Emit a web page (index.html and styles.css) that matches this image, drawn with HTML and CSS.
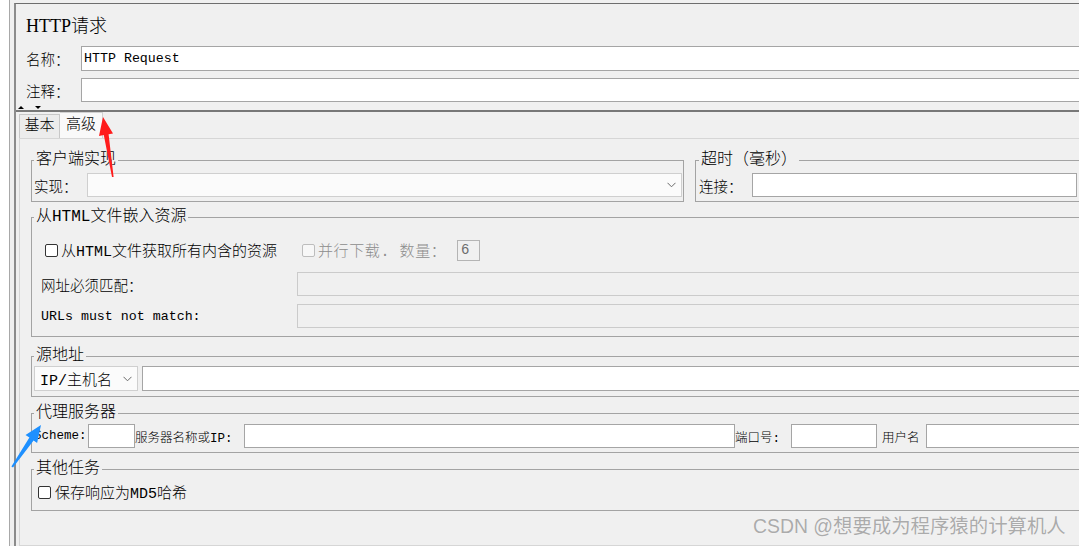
FILE: index.html
```html
<!DOCTYPE html>
<html lang="zh-CN">
<head>
    <meta charset="UTF-8">
    <meta name="viewport" content="width=device-width, initial-scale=1.0">
    <title>HTTP请求</title>
    <link rel="stylesheet" href="styles.css">
</head>
<body>

<div class="app">
    <div class="side"></div>
    <div class="frame">
        <div class="head">
            <h1 class="title">HTTP请求</h1>
            <div class="row">
                <label class="row-label">名称：</label>
                <input class="text" type="text" value="HTTP Request">
            </div>
            <div class="row row-comment">
                <label class="row-label">注释：</label>
                <input class="text" type="text">
            </div>
        </div>

        <div class="splitter">
            <span class="tri up"></span>
            <span class="tri down"></span>
        </div>

        <div class="tabs">
            <div class="tab">基本</div>
            <div class="tab active">高级</div>
        </div>

        <div class="panel">
            <div class="fs-row">
                <fieldset class="group impl">
                    <legend>客户端实现</legend>
                    <div class="line">
                        <label class="lbl w53">实现：</label>
                        <div class="combo grow">
                            <span></span>
                            <svg class="chev" width="9" height="6" viewBox="0 0 9 6"><path d="M0.5 0.8 L4.5 4.8 L8.5 0.8" fill="none" stroke="#6a6a6a" stroke-width="1"/></svg>
                        </div>
                    </div>
                </fieldset>
                <fieldset class="group timeout">
                    <legend>超时（毫秒）</legend>
                    <div class="line">
                        <label class="lbl w53">连接：</label>
                        <input class="text grow" type="text">
                    </div>
                </fieldset>
            </div>

            <fieldset class="group embed">
                <legend>从HTML文件嵌入资源</legend>
                <div class="line">
                    <input class="check first" type="checkbox">
                    <span class="check-text all-res">从HTML文件获取所有内含的资源</span>
                    <input class="check" type="checkbox" disabled>
                    <span class="check-text muted par">并行下载. 数量：</span>
                    <input class="text num" type="text" value="6" disabled>
                </div>
                <div class="line gap10">
                    <label class="lbl w256">网址必须匹配：</label>
                    <input class="text grow" type="text" disabled>
                </div>
                <div class="line gap8">
                    <label class="lbl w256 mono">URLs must not match:</label>
                    <input class="text grow" type="text" disabled>
                </div>
            </fieldset>

            <fieldset class="group source">
                <legend>源地址</legend>
                <div class="line">
                    <div class="combo ip">
                        <span>IP/主机名</span>
                        <svg class="chev" width="9" height="6" viewBox="0 0 9 6"><path d="M0.5 0.8 L4.5 4.8 L8.5 0.8" fill="none" stroke="#6a6a6a" stroke-width="1"/></svg>
                    </div>
                    <input class="text grow" type="text">
                </div>
            </fieldset>

            <fieldset class="group proxy">
                <legend>代理服务器</legend>
                <div class="line small">
                    <label class="lbl w54">Scheme:</label>
                    <input class="text w47" type="text">
                    <label class="lbl w109">服务器名称或IP:</label>
                    <input class="text w491" type="text">
                    <label class="lbl w56">端口号:</label>
                    <input class="text w86" type="text">
                    <label class="lbl user">用户名</label>
                    <input class="text grow" type="text">
                </div>
            </fieldset>

            <fieldset class="group other">
                <legend>其他任务</legend>
                <div class="line short">
                    <input class="check" type="checkbox">
                    <span class="check-text">保存响应为MD5哈希</span>
                </div>
            </fieldset>
        </div>
    </div>

    <svg class="marks" width="1079" height="546" viewBox="0 0 1079 546">
        <polygon fill="#ff1c1c" points="103,117 113,133.5 108.6,134.3 113.6,177 112,177 103.8,135.1 99,136"/>
        <polygon fill="#1e90ff" points="41,425 37.1,443 33.6,440.6 13,467.5 11.4,466.5 29.4,437.6 25.5,435"/>
    </svg>

    <div class="watermark">CSDN @想要成为程序猿的计算机人</div>
</div>

</body>
</html>
```

FILE: styles.css
```css
* {
    box-sizing: border-box;
}
html, body {
    margin: 0;
    height: 100%;
    overflow: hidden;
}
body {
    background-color: #f0f0f0;
    font-family: "Liberation Mono", "Noto Sans CJK SC", monospace;
    font-size: 14.5px;
    font-weight: 300;
    color: #000;
}
.app {
    position: relative;
    display: flex;
    height: 546px;
}
.side {
    flex: none;
    width: 10px;
    background: #fff;
    border-right: 1px solid #a8a8a8;
}
.frame {
    flex: none;
    width: 1090px;
    margin-left: 4px;
    margin-top: 3px;
    border-top: 1px solid #6e6e6e;
    border-left: 2px solid #8c8c8c;
    display: flex;
    flex-direction: column;
}
.head {
    padding-left: 10px;
}
.title {
    margin: 10px 0 0;
    font-family: "Liberation Serif", "Noto Sans CJK SC", serif;
    font-size: 18px;
    line-height: 24px;
    font-weight: 300;
}
.row {
    display: flex;
    align-items: center;
    height: 25px;
    margin-top: 8px;
}
.row-comment {
    height: 24px;
    margin-top: 7px;
}
.row-label {
    flex: none;
    width: 55px;
}
input.text {
    height: 100%;
    min-width: 0;
    margin: 0;
    padding: 0 2px;
    border: 1px solid #a5a5a5;
    background: #fff;
    font-family: "Liberation Mono", "Noto Sans CJK SC", monospace;
    font-size: 13.3px;
    color: #000;
    outline: none;
}
.row input.text {
    flex: 1;
}
input.text:disabled {
    background: #f0f0f0;
    border-color: #cbcbcb;
}
.splitter {
    height: 10px;
    display: flex;
    align-items: flex-end;
    gap: 7px;
    padding: 0 0 1px 2px;
    border-bottom: 2px solid #787878;
}
.tri {
    width: 0;
    height: 0;
    border-left: 3px solid transparent;
    border-right: 3px solid transparent;
}
.tri.up {
    border-bottom: 3px solid #000;
}
.tri.down {
    border-top: 3px solid #000;
    margin-left: 4px;
}
.tabs {
    display: flex;
    align-items: flex-end;
    height: 26px;
    padding-left: 3px;
}
.tab {
    height: 24px;
    width: 41px;
    text-align: center;
    font-size: 15px;
    line-height: 23px;
    background: #ececec;
    border: 1px solid #c8c8c8;
    border-bottom: none;
}
.tab.active {
    height: 26px;
    width: 43px;
    line-height: 25px;
    background: #f9f9f9;
    border-color: #d2d2d2;
    border-left: none;
}
.panel {
    flex: 1;
    margin-left: 3px;
    border: 1px solid #d6d6d6;
    padding: 11px 0 0 11px;
}
.fs-row {
    display: flex;
    gap: 11px;
}
fieldset.group {
    margin: 0;
    min-width: 0;
    border: 1px solid #a3a3a3;
    padding: 3px 1px 4px 2px;
}
fieldset.group legend {
    font-size: 16px;
    line-height: 20px;
    padding: 0 2px;
    margin: 0;
}
.impl {
    flex: none;
    width: 653px;
}
.timeout {
    flex: none;
    width: 392px;
    padding: 3px 9px 4px 3px !important;
}
.line {
    display: flex;
    align-items: center;
    height: 24px;
}
.lbl {
    flex: none;
    white-space: nowrap;
}
.w53 { width: 53px; }
.w256 { width: 256px; }
.grow {
    flex: 1;
}
.combo {
    display: flex;
    align-items: center;
    justify-content: space-between;
    height: 100%;
    padding: 0 5px;
    background: #fbfbfb;
    border: 1px solid #cfcfcf;
}
.chev {
    flex: none;
}
.embed {
    margin-top: 5px !important;
    padding: 11px 0 8px 2px !important;
}
.embed .line {
    padding-left: 7px;
}
.check {
    appearance: none;
    -webkit-appearance: none;
    flex: none;
    width: 13px;
    height: 13px;
    margin: 0;
    border: 1px solid #333;
    border-radius: 2px;
    background: #fff;
}
.check:disabled {
    border-color: #bdbdbd;
    background: #f7f7f7;
}
.check.first {
    margin-left: 4px;
}
.check-text {
    margin-left: 3px;
    white-space: nowrap;
}
.check-text.all-res {
    width: 241px;
    font-size: 15px;
}
.check-text.par {
    width: 139px;
    font-size: 15px;
    letter-spacing: 0.6px;
}
.muted {
    color: #8c8c8c;
}
input.text.num {
    width: 23px;
    height: 21px;
    padding: 0 3px;
    border-color: #b4b4b4;
    color: #6c6c6c;
    font-size: 14px;
}
.gap10 {
    margin-top: 10px;
}
.gap8 {
    margin-top: 8px;
}
.mono {
    font-size: 13.3px;
}
.source {
    margin-top: 9px !important;
    padding: 0 0 5px 2px !important;
}
.source .line {
    height: 25px;
}
.combo.ip {
    flex: none;
    width: 104px;
    margin-right: 4px;
    padding: 0 5px 0 5px;
    font-size: 15px;
}
.proxy {
    margin-top: 6px !important;
    padding: 1px 0 4px 2px !important;
}
.line.small {
    font-size: 12.5px;
}
.w54 { width: 54px; }
.w47 { width: 47px; flex: none; }
.w109 { width: 109px; }
.w491 { width: 491px; flex: none; }
.w56 { width: 56px; }
.w86 { width: 86px; flex: none; }
.lbl.user {
    width: 49px;
    padding-left: 5px;
}
.other {
    margin-top: 6px !important;
    padding: 2px 0 7px 2px !important;
}
.other .line {
    padding-left: 4px;
}
.line.short {
    height: 22px;
}
.other .check-text {
    margin-left: 4px;
    font-size: 15px;
}
.marks {
    position: absolute;
    left: 0;
    top: 0;
    pointer-events: none;
}
.watermark {
    position: absolute;
    left: 753px;
    top: 513px;
    font-family: "Liberation Sans", "Noto Sans CJK SC", sans-serif;
    font-size: 19.4px;
    font-weight: normal;
    line-height: 26px;
    color: #ababab;
    text-shadow: 0 0 1px #fff;
    white-space: nowrap;
}
```
